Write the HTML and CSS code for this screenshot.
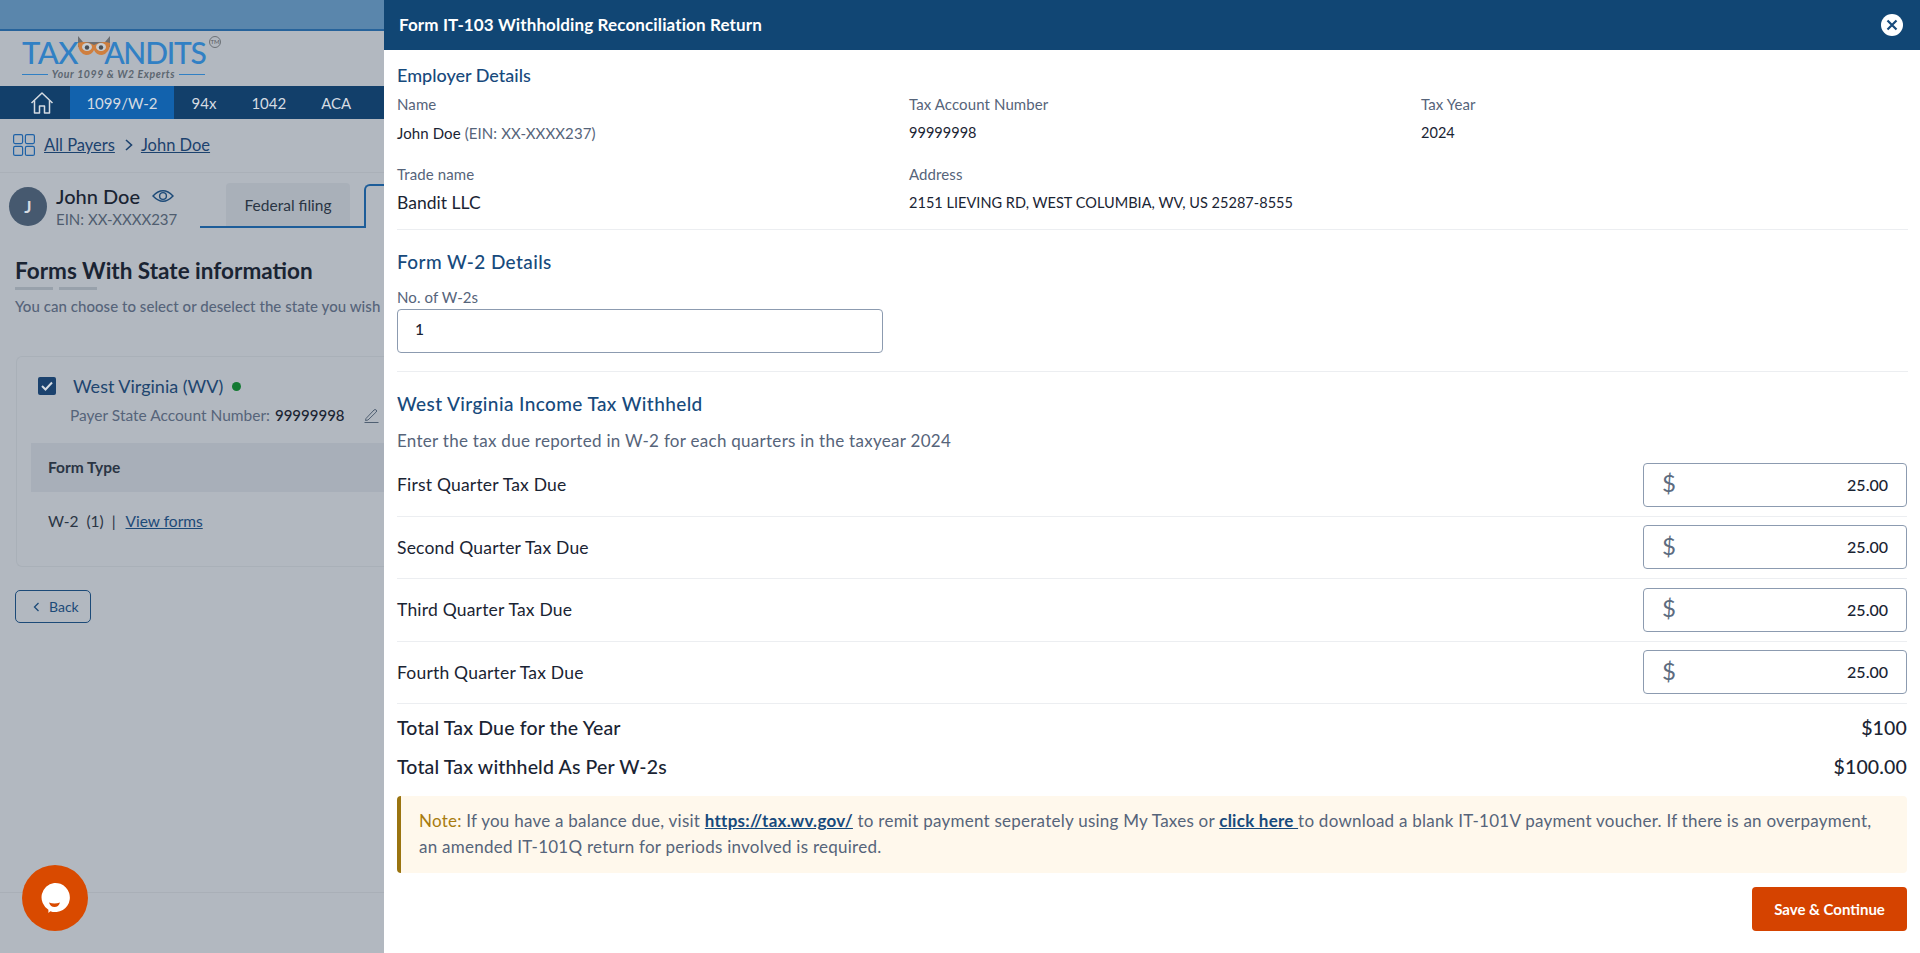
FILE: index.html
```html
<!DOCTYPE html>
<html lang="en">

<head>
    <meta charset="UTF-8">
    <meta name="viewport" content="width=device-width, initial-scale=1.0">
    <title>Form IT-103 Withholding Reconciliation Return</title>
    <link rel="stylesheet" href="styles.css">
</head>

<body>

    <div class="page">
        <div class="topbar"></div>

        <div class="logo">
            <div class="logo-word">
                <span>TAX</span>
                <svg class="owl" width="34" height="24" viewBox="0 0 34 24">
                    <path d="M1 0 L6 6 H28 L33 0 L33 11 H1 Z" fill="#6c6f73"/>
                    <path d="M1 7 Q9 4 17 9 Q25 4 33 7 Q33 17 25 19 Q19 19 17 14 Q15 19 9 19 Q1 17 1 7 Z" fill="#cf7f3f"/>
                    <ellipse cx="10" cy="11" rx="5" ry="4" fill="#c8cdd2"/>
                    <ellipse cx="24" cy="11" rx="5" ry="4" fill="#c8cdd2"/>
                    <circle cx="10" cy="11.5" r="2.2" fill="#4a4f55"/>
                    <circle cx="24" cy="11.5" r="2.2" fill="#4a4f55"/>
                </svg>
                <span class="logo-andits">ANDITS</span>
                <span class="logo-tm">TM</span>
            </div>
            <div class="logo-tag">Your 1099 &amp; W2 Experts</div>
        </div>

        <nav class="nav">
            <a class="nav-home">
                <svg width="24" height="24" viewBox="0 0 24 24" fill="none" stroke="#d5dbe2" stroke-width="1.5" stroke-linejoin="round">
                    <path d="M1.5 12 L12 2 L22.5 12"/>
                    <path d="M4.5 9.5 V22 H9.5 V15 H14.5 V22 H19.5 V9.5"/>
                </svg>
            </a>
            <a class="nav-item active">1099/W-2</a>
            <a class="nav-item">94x</a>
            <a class="nav-item">1042</a>
            <a class="nav-item">ACA</a>
        </nav>

        <div class="breadcrumb">
            <svg width="22" height="22" viewBox="0 0 22 22" fill="none" stroke="#1f62a6" stroke-width="1.2">
                <rect x="0.6" y="0.6" width="9" height="9" rx="1.5"/>
                <rect x="12.4" y="0.6" width="9" height="9" rx="1.5"/>
                <rect x="0.6" y="12.4" width="9" height="9" rx="1.5"/>
                <rect x="12.4" y="12.4" width="9" height="9" rx="1.5"/>
            </svg>
            <a>All Payers</a>
            <svg class="crumb-sep" width="10" height="12" viewBox="0 0 10 12" fill="none" stroke="#1c426e" stroke-width="1.6">
                <path d="M2 1 L7.5 6 L2 11"/>
            </svg>
            <a>John Doe</a>
        </div>

        <div class="payer-row">
            <div class="avatar">J</div>
            <div class="payer-info">
                <div class="payer-name">
                    John Doe
                    <svg width="22" height="14" viewBox="0 0 22 14" fill="none" stroke="#1c4a78" stroke-width="1.4">
                        <path d="M1 7 Q11 -3.5 21 7 Q11 17.5 1 7 Z"/>
                        <circle cx="11" cy="7" r="3.4"/>
                    </svg>
                </div>
                <div class="payer-ein">EIN: XX-XXXX237</div>
            </div>
            <div class="tabs">
                <div class="tab">Federal filing</div>
                <div class="tab-active"></div>
            </div>
        </div>

        <div class="content">
            <h2 class="page-title">Forms With State information</h2>
            <div class="dashes"><span></span><span></span></div>
            <p class="page-sub">You can choose to select or deselect the state you wish</p>

            <div class="state-card">
                <div class="state-head">
                    <span class="checkbox">
                        <svg width="12" height="10" viewBox="0 0 12 10" fill="none" stroke="#d5dbe2" stroke-width="2">
                            <path d="M1 5 L4.5 8.5 L11 1.5"/>
                        </svg>
                    </span>
                    <span class="state-name">West Virginia (WV)</span>
                    <span class="dot"></span>
                </div>
                <div class="state-acct">
                    Payer State Account Number: <b>99999998</b>
                    <svg width="15" height="15" viewBox="0 0 15 15" fill="none" stroke="#4f5f72" stroke-width="1">
                        <path d="M2 10.5 L10 2 Q11 1 12.2 2 Q13.2 3 12.2 4 L4 12 L1.5 12.5 Z"/>
                        <path d="M0.5 14.5 H14.5"/>
                    </svg>
                </div>
                <div class="state-table-head">Form Type</div>
                <div class="state-table-row">
                    W-2&nbsp; (1) &nbsp;|&nbsp; <a>View forms</a>
                </div>
            </div>

            <button class="btn-back">
                <svg width="7" height="10" viewBox="0 0 7 10" fill="none" stroke="#1c4a78" stroke-width="1.3">
                    <path d="M5.5 1 L1.5 5 L5.5 9"/>
                </svg>
                Back
            </button>
        </div>

        <div class="page-foot"></div>
    </div>

    <button class="chat">
        <svg width="32" height="32" viewBox="0 0 32 32">
            <path d="M16 1 A15.5 15.5 0 1 1 12 31 L10 33 L10 29.5 A15.5 15.5 0 0 1 16 1 Z" fill="#fff" transform="scale(.94)"/>
            <path d="M10 20.5 Q15.5 22.5 21 20.5 Q19.5 25 15.5 25 Q11.5 25 10 20.5 Z" fill="#d94a00"/>
        </svg>
    </button>

    <aside class="panel">
        <header class="panel-header">
            <h1>Form IT-103 Withholding Reconciliation Return</h1>
            <button class="panel-close">
                <svg width="12" height="12" viewBox="0 0 12 12" stroke="#174a7c" stroke-width="2.2">
                    <path d="M1.5 1.5 L10.5 10.5 M10.5 1.5 L1.5 10.5"/>
                </svg>
            </button>
        </header>

        <section class="section employer">
            <h3>Employer Details</h3>
            <div class="info-grid">
                <div>
                    <label>Name</label>
                    <div class="value name">John Doe <span class="muted">(EIN: XX-XXXX237)</span></div>
                </div>
                <div>
                    <label>Tax Account Number</label>
                    <div class="value">99999998</div>
                </div>
                <div>
                    <label>Tax Year</label>
                    <div class="value">2024</div>
                </div>
                <div>
                    <label>Trade name</label>
                    <div class="value large">Bandit LLC</div>
                </div>
                <div class="span-two">
                    <label>Address</label>
                    <div class="value">2151 LIEVING RD, WEST COLUMBIA, WV, US 25287-8555</div>
                </div>
            </div>
        </section>

        <section class="section w2">
            <h3>Form W-2 Details</h3>
            <label class="w2-label">No. of W-2s</label>
            <div class="field">1</div>
        </section>

        <section class="withheld">
            <h3>West Virginia Income Tax Withheld</h3>
            <p class="hint">Enter the tax due reported in W-2 for each quarters in the taxyear 2024</p>

            <div class="quarter">
                <span>First Quarter Tax Due</span>
                <div class="money"><i>$</i>25.00</div>
            </div>
            <div class="quarter">
                <span>Second Quarter Tax Due</span>
                <div class="money"><i>$</i>25.00</div>
            </div>
            <div class="quarter">
                <span>Third Quarter Tax Due</span>
                <div class="money"><i>$</i>25.00</div>
            </div>
            <div class="quarter">
                <span>Fourth Quarter Tax Due</span>
                <div class="money"><i>$</i>25.00</div>
            </div>

            <div class="total first">
                <span>Total Tax Due for the Year</span>
                <span>$100</span>
            </div>
            <div class="total">
                <span>Total Tax withheld As Per W-2s</span>
                <span>$100.00</span>
            </div>

            <div class="note">
                <span class="note-label">Note:</span> If you have a balance due, visit <a>https://tax.wv.gov/</a> to remit payment seperately using My Taxes or <a>click here </a>to download a blank IT-101V payment voucher. If there is an overpayment,<br>
                an amended IT-101Q return for periods involved is required.
            </div>

            <div class="actions">
                <button class="btn-save">Save &amp; Continue</button>
            </div>
        </section>
    </aside>

</body>

</html>
```

FILE: styles.css
```css
* {
    box-sizing: border-box;
}

html,
body {
    margin: 0;
    padding: 0;
    height: 100%;
    overflow: hidden;
}

body {
    font-family: 'Lato', 'Noto Sans', sans-serif;
    background-color: #b2b8c0;
    color: #1a2433;
}

h1,
h2,
h3,
p {
    margin: 0;
    font-weight: 500;
}

a {
    text-decoration: underline;
}

button {
    font-family: inherit;
    cursor: pointer;
}

/* page behind the drawer, already dimmed */
.page {
    width: 384px;
    height: 953px;
    overflow: hidden;
    display: flex;
    flex-direction: column;
}

.topbar {
    height: 31px;
    background-color: #5a86ac;
    border-bottom: 2px solid #27639b;
}

.logo {
    height: 55px;
    padding: 6px 0 0 22px;
}

.logo-word {
    display: flex;
    align-items: center;
    height: 30px;
    font-size: 31px;
    font-weight: 500;
    line-height: 30px;
    color: #3180c4;
    letter-spacing: -0.5px;
    position: relative;
    width: 200px;
}

.owl {
    margin: -9px -7px 0 -1px;
}

.logo-andits {
    font-size: 30px;
    letter-spacing: -1.2px;
}

.logo-tm {
    position: absolute;
    left: 187px;
    top: -1px;
    width: 12px;
    height: 12px;
    border: 1px solid #6c7177;
    border-radius: 50%;
    font-size: 6px;
    line-height: 10px;
    text-align: center;
    letter-spacing: 0;
    color: #5c6167;
}

.logo-tag {
    width: 183px;
    margin-top: 1px;
    display: flex;
    align-items: center;
    gap: 4px;
    font-size: 10.5px;
    font-style: italic;
    font-weight: 700;
    letter-spacing: 0.6px;
    color: #5c6670;
    white-space: nowrap;
}

.logo-tag::before,
.logo-tag::after {
    content: "";
    flex: 1;
    height: 1px;
    background-color: #3180c4;
}

.nav {
    height: 33px;
    display: flex;
    align-items: stretch;
    background-color: #123f6a;
    color: #d5dbe2;
    font-size: 15px;
}

.nav-home {
    width: 70px;
    padding-left: 30px;
    display: flex;
    align-items: center;
}

.nav-item {
    padding: 0 17.5px;
    display: flex;
    align-items: center;
    text-decoration: none;
    white-space: nowrap;
}

.nav-item.active {
    width: 104px;
    padding: 0;
    justify-content: center;
    background-color: #1262ad;
}

.breadcrumb {
    height: 54px;
    padding: 0 0 2px 13px;
    display: flex;
    align-items: center;
    gap: 9px;
    font-size: 16.5px;
    color: #1c426e;
    border-bottom: 1px solid #aab0b8;
}

.crumb-sep {
    margin-right: -2px;
}

.payer-row {
    height: 62px;
    flex-shrink: 0;
    position: relative;
    padding: 14px 0 0 9px;
    display: flex;
}

.avatar {
    width: 38px;
    height: 39px;
    border-radius: 50%;
    background-color: #46596f;
    color: #d5dbe2;
    font-weight: 700;
    font-size: 17px;
    line-height: 39px;
    text-align: center;
}

.payer-info {
    margin-left: 9px;
}

.payer-name {
    display: flex;
    align-items: center;
    gap: 12px;
    height: 24px;
    margin-top: -3px;
    font-size: 20px;
    font-weight: 500;
    color: #1a2433;
    white-space: nowrap;
}

.payer-ein {
    font-size: 15px;
    line-height: 22px;
    color: #4f5d6f;
    white-space: nowrap;
}

.tabs {
    position: absolute;
    left: 200px;
    top: 10px;
    width: 184px;
    height: 45px;
}

.tabs::after {
    content: "";
    position: absolute;
    left: 0;
    bottom: 0;
    width: 166px;
    height: 2px;
    background-color: #1d5d99;
}

.tab {
    margin-left: 26px;
    width: 124px;
    height: 44px;
    background-color: #a9b0b9;
    border-radius: 4px 4px 0 0;
    font-size: 15.5px;
    line-height: 44px;
    text-align: center;
    color: #2a3544;
}

.tab-active {
    position: absolute;
    left: 164px;
    top: 1px;
    width: 20px;
    height: 44px;
    border-left: 2px solid #1d5d99;
    border-top: 2px solid #1d5d99;
    border-top-left-radius: 6px;
}

.content {
    flex: 1;
    padding: 0 0 0 15px;
}

.page-title {
    margin-top: 21px;
    font-size: 22.5px;
    line-height: 30px;
    font-weight: 700;
    color: #1a2433;
    white-space: nowrap;
}

.dashes {
    display: flex;
    gap: 6px;
    margin-top: 1px;
}

.dashes span {
    width: 38px;
    height: 3px;
    background-color: #98a1ab;
}

.page-sub {
    margin-top: 6px;
    font-size: 15px;
    line-height: 20px;
    letter-spacing: 0.05px;
    color: #56647a;
    white-space: nowrap;
}

.state-card {
    margin: 40px 0 0 1px;
    width: 368px;
    height: 211px;
    border: 1px solid #a9b0b8;
    border-right: 0;
    border-radius: 6px 0 0 6px;
    padding: 20px 0 0 14px;
}

.state-head {
    display: flex;
    align-items: center;
    height: 18px;
    margin-left: 7px;
}

.checkbox {
    width: 18px;
    height: 18px;
    border-radius: 2px;
    background-color: #1b426e;
    display: flex;
    align-items: center;
    justify-content: center;
}

.state-name {
    margin-left: 17px;
    font-size: 18px;
    color: #20456f;
    white-space: nowrap;
}

.dot {
    margin-left: 9px;
    width: 9px;
    height: 9px;
    border-radius: 50%;
    background-color: #147a33;
}

.state-acct {
    margin: 8px 0 0 39px;
    display: flex;
    align-items: center;
    gap: 5px;
    height: 24px;
    font-size: 15.5px;
    color: #56647a;
    white-space: nowrap;
}

.state-acct b {
    font-weight: 500;
    font-size: 15px;
    color: #1a2433;
}

.state-acct svg {
    margin-left: 14px;
}

.state-table-head {
    margin-top: 16px;
    height: 49px;
    padding-left: 17px;
    font-size: 15.5px;
    font-weight: 700;
    line-height: 49px;
    background-color: #a8afb9;
    color: #2a3544;
}

.state-table-row {
    margin-top: 16px;
    padding-left: 17px;
    font-size: 15.5px;
    line-height: 26px;
    color: #2a3544;
}

.state-table-row a {
    color: #1c4a78;
    margin-left: 2px;
}

.btn-back {
    display: flex;
    align-items: center;
    gap: 9px;
    margin-top: 23px;
    padding: 0 0 0 17px;
    width: 76px;
    height: 33px;
    background: none;
    border: 1px solid #1c4a78;
    border-radius: 5px;
    font-size: 14px;
    color: #1c4a78;
}

.page-foot {
    position: absolute;
    left: 0;
    top: 892px;
    width: 384px;
    border-top: 1px solid #a9afb7;
}

/* chat bubble */
.chat {
    position: absolute;
    left: 22px;
    top: 865px;
    width: 66px;
    height: 66px;
    padding: 0;
    border: none;
    border-radius: 50%;
    background-color: #d94a00;
    display: flex;
    align-items: center;
    justify-content: center;
}

/* drawer */
.panel {
    position: absolute;
    top: 0;
    right: 0;
    width: 1536px;
    height: 953px;
    background-color: #fff;
    overflow: hidden;
}

.panel-header {
    height: 50px;
    padding: 0 17px 0 15px;
    display: flex;
    align-items: center;
    justify-content: space-between;
    background-color: #114674;
}

.panel-header h1 {
    padding-bottom: 2px;
    font-size: 17px;
    font-weight: 700;
    letter-spacing: 0.12px;
    color: #fff;
}

.panel-close {
    width: 22px;
    height: 22px;
    padding: 0;
    border: none;
    border-radius: 50%;
    background-color: #fff;
    display: flex;
    align-items: center;
    justify-content: center;
}

.section {
    margin: 0 12px 0 13px;
    border-bottom: 1px solid #eceef1;
}

h3 {
    font-size: 19px;
    line-height: 24px;
    letter-spacing: 0.4px;
    color: #174a7c;
}

.employer {
    height: 180px;
    padding-top: 13px;
}

.employer h3 {
    font-size: 18px;
    letter-spacing: 0;
}

.info-grid {
    display: grid;
    grid-template-columns: 512px 512px 1fr;
    row-gap: 17px;
    margin-top: 5px;
}

.span-two {
    grid-column: span 2;
}

label {
    display: block;
    font-size: 15px;
    line-height: 24px;
    letter-spacing: 0.1px;
    color: #56647a;
}

.value {
    margin-top: 5px;
    font-size: 14.5px;
    line-height: 24px;
    letter-spacing: 0.03px;
    color: #1a2433;
}

.value.name {
    font-size: 15px;
    letter-spacing: 0.1px;
}

.value.large {
    font-size: 17.5px;
}

.muted {
    color: #56647a;
}

.w2 {
    height: 142px;
    padding-top: 20px;
}

.w2-label {
    margin-top: 13px;
    line-height: 20px;
    width: 486px;
    height: 22px;
}

.field {
    width: 486px;
    height: 44px;
    padding-left: 17px;
    border: 1px solid #8c9bb0;
    border-radius: 4px;
    font-size: 15.5px;
    font-weight: 500;
    line-height: 39px;
    color: #1a2433;
}

.withheld {
    margin: 0 13px 0 13px;
    padding-top: 20px;
}

.hint {
    margin-top: 13px;
    font-size: 17px;
    line-height: 24px;
    letter-spacing: 0.28px;
    font-weight: 400;
    color: #56647a;
}

.quarter {
    height: 62.5px;
    display: flex;
    align-items: center;
    justify-content: space-between;
    border-bottom: 1px solid #eceef1;
    font-size: 17.5px;
    letter-spacing: 0.2px;
    color: #1a2433;
}

.hint + .quarter {
    margin-top: 1px;
}

.money {
    width: 264px;
    height: 44px;
    padding: 0 18px 1px 18px;
    display: flex;
    align-items: center;
    justify-content: space-between;
    border: 1px solid #8c9bb0;
    border-radius: 4px;
    font-size: 16px;
    letter-spacing: 0;
    font-weight: 500;
}

.money i {
    font-style: normal;
    font-size: 24px;
    font-weight: 400;
    color: #5d6b80;
    margin-top: -3px;
}

.total {
    display: flex;
    justify-content: space-between;
    margin-top: 15px;
    height: 24px;
    font-size: 19.5px;
    line-height: 24px;
    letter-spacing: 0.15px;
    font-weight: 500;
    color: #1a2433;
}

.total.first {
    margin-top: 12px;
}

.note {
    margin-top: 17px;
    height: 77px;
    padding: 12px 0 0 18px;
    border-left: 4px solid #9a7410;
    border-radius: 4px;
    background-color: #fff8ec;
    font-size: 17px;
    line-height: 26px;
    letter-spacing: 0.25px;
    color: #56647a;
    white-space: nowrap;
}

.note-label {
    color: #a87c10;
}

.note a {
    color: #174a7c;
    font-weight: 700;
}

.actions {
    margin-top: 14px;
    display: flex;
    justify-content: flex-end;
}

.btn-save {
    width: 155px;
    height: 44px;
    border: none;
    border-radius: 4px;
    background-color: #d54300;
    color: #fff;
    font-size: 15px;
    font-weight: 700;
}
```
